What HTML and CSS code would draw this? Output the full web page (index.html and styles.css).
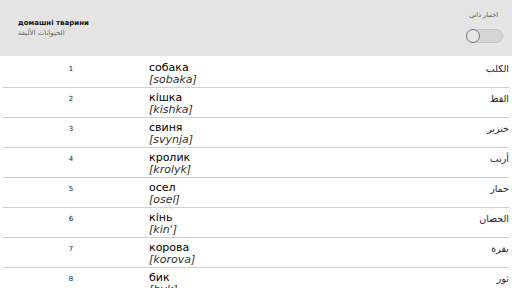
FILE: index.html
```html
<!DOCTYPE html>
<html>
<head>
<meta charset="utf-8">
<link rel="stylesheet" href="styles.css">
</head>
<body>
<header class="top">
  <div class="titles">
    <div class="title">домашні тварини</div>
    <div class="subtitle">الحيوانات الأليفة</div>
  </div>
  <div class="quiz">
    <div class="quiz-label">اختبار ذاتي</div>
    <div class="switch"><span class="knob"></span></div>
  </div>
</header>
<main class="list">
  <div class="row"><div class="num">1</div><div class="word"><div class="uk">собака</div><div class="tr">[sobaka]</div></div><div class="ar">الكلب</div></div>
  <div class="row"><div class="num">2</div><div class="word"><div class="uk">кішка</div><div class="tr">[kishka]</div></div><div class="ar">القط</div></div>
  <div class="row"><div class="num">3</div><div class="word"><div class="uk">свиня</div><div class="tr">[svynja]</div></div><div class="ar">خنزير</div></div>
  <div class="row"><div class="num">4</div><div class="word"><div class="uk">кролик</div><div class="tr">[krolyk]</div></div><div class="ar">أرنب</div></div>
  <div class="row"><div class="num">5</div><div class="word"><div class="uk">осел</div><div class="tr">[osel]</div></div><div class="ar">حمار</div></div>
  <div class="row"><div class="num">6</div><div class="word"><div class="uk">кінь</div><div class="tr">[kin']</div></div><div class="ar">الحصان</div></div>
  <div class="row"><div class="num">7</div><div class="word"><div class="uk">корова</div><div class="tr">[korova]</div></div><div class="ar">بقرة</div></div>
  <div class="row"><div class="num">8</div><div class="word"><div class="uk">бик</div><div class="tr">[byk]</div></div><div class="ar">ثور</div></div>
</main>
</body>
</html>
```

FILE: styles.css
```css
html, body {
  margin: 0;
  padding: 0;
  background: #ffffff;
  font-family: "DejaVu Sans", sans-serif;
  color: #111;
  overflow: hidden;
}
.top {
  height: 56px;
  background: #e4e4e4;
  display: flex;
  justify-content: space-between;
  align-items: flex-start;
  padding: 0 9px 0 18px;
  box-sizing: border-box;
}
.titles {
  padding-top: 18px;
}
.title {
  font-size: 7px;
  font-weight: bold;
  line-height: 10px;
  color: #111;
}
.subtitle {
  font-size: 7px;
  line-height: 11px;
  color: #666;
}
.quiz {
  padding-top: 11px;
  display: flex;
  flex-direction: column;
  align-items: flex-end;
}
.quiz-label {
  font-size: 6.5px;
  line-height: 9px;
  color: #555;
  padding-right: 5px;
}
.switch {
  margin-top: 9px;
  width: 35px;
  height: 12px;
  border-radius: 7px;
  background: #d6d6d6;
  border: 1px solid #c4c4c4;
  position: relative;
}
.knob {
  position: absolute;
  left: -1px;
  top: -1px;
  width: 12px;
  height: 12px;
  border-radius: 50%;
  background: #e6e6e6;
  border: 1px solid #777;
}
.list {
  padding-top: 2px;
}
.row {
  margin: 0 3px;
  height: 30px;
  box-sizing: border-box;
  border-bottom: 1px solid #cfcfcf;
  display: grid;
  grid-template-columns: 136px 1fr auto;
  align-items: start;
}
.num {
  text-align: center;
  font-size: 7px;
  padding-top: 7px;
  color: #222;
}
.word {
  padding-left: 10px;
  padding-top: 4px;
}
.uk {
  font-size: 11px;
  line-height: 12px;
  color: #000;
}
.tr {
  font-size: 11px;
  line-height: 12px;
  font-style: italic;
  color: #333;
}
.ar {
  font-size: 9.5px;
  padding-top: 5px;
  padding-right: 0;
  color: #222;
}
```
